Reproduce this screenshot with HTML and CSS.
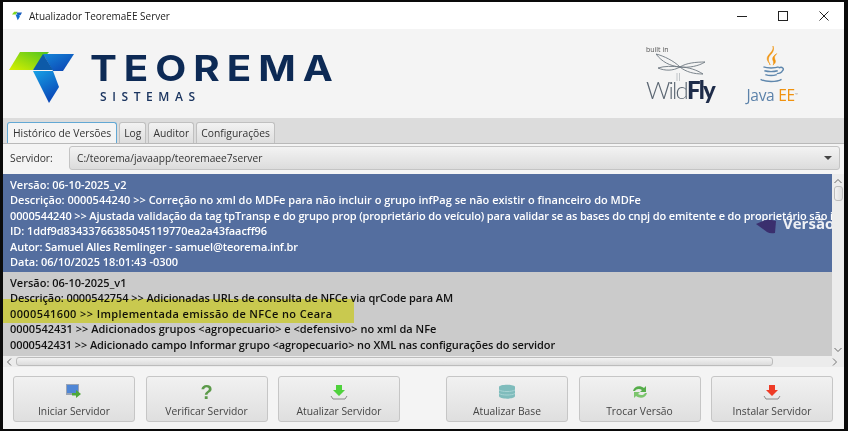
FILE: index.html
```html
<!DOCTYPE html>
<html lang="pt-BR">
<head>
<meta charset="utf-8">
<title>Atualizador TeoremaEE Server</title>
<link rel="stylesheet" href="styles.css">
</head>
<body>
<div class="window">
  <div class="titlebar">
    <svg class="app-icon" width="10" height="10" viewBox="0 0 14 12">
      <polygon points="0,4 3,0 8,0 5,4" fill="#7fd81e"/>
      <polygon points="6,1 14,1 12,5 8,5" fill="#1a5fc0"/>
      <polygon points="5,4 10,4 11,7 8,12" fill="#0f6fd0"/>
    </svg>
    <span class="title-text">Atualizador TeoremaEE Server</span>
    <div class="win-controls">
      <svg width="10" height="10" viewBox="0 0 10 10"><path d="M0 5.500H10" stroke="#222" stroke-width="1"/></svg>
      <svg width="10" height="10" viewBox="0 0 10 10"><rect x=".5" y=".5" width="9" height="9" fill="none" stroke="#222"/></svg>
      <svg width="10" height="10" viewBox="0 0 10 10"><path d="M.5 .5L9.500 9.500M9.500 .5L.5 9.500" stroke="#222" stroke-width="1"/></svg>
    </div>
  </div>

  <header class="brand">
    <svg class="logo-mark" width="66" height="52" viewBox="0 0 66 52">
      <defs>
        <linearGradient id="g1" x1="0" y1="1" x2="1" y2="0"><stop offset="0" stop-color="#d8f000"/><stop offset="1" stop-color="#4fc41f"/></linearGradient>
        <linearGradient id="g2" x1="0" y1="0" x2="1" y2="1"><stop offset="0" stop-color="#1586d8"/><stop offset="1" stop-color="#0b3fb0"/></linearGradient>
        <linearGradient id="g3" x1="0" y1="0" x2=".5" y2="1"><stop offset="0" stop-color="#16a2e6"/><stop offset="1" stop-color="#0a48b8"/></linearGradient>
      </defs>
      <polygon points="11,0 40,0 24,18 0,18" fill="url(#g1)"/>
      <polygon points="34,2 65,2 54,19 44,19" fill="url(#g2)"/>
      <polygon points="34,2 24,18 44,18" fill="#0d5aa8"/>
      <polygon points="24,19 44,19 50,35 40,51" fill="url(#g3)"/>
    </svg>
    <div class="wordmark">
      <span class="word-main">TEOREMA</span>
      <span class="word-sub">SISTEMAS</span>
    </div>
    <div class="partner wildfly">
      <span class="built">built in</span>
      <svg class="fly" width="50" height="28" viewBox="0 0 50 28">
        <path d="M0 1C8 3 18 8 24 14C14 13 6 9 0 1ZM2 15C8 13 17 13 24 14C17 18 9 18 2 15ZM24 14C30 10 40 9 49 9C43 13 33 15 24 14ZM24 14C32 14 41 17 47 21C38 21 30 19 24 14Z" fill="#f4f4f4" stroke="#6d7780" stroke-width=".9"/>
        <path d="M21 20V28M23.500 20V28" stroke="#aab0b5" stroke-width=".7"/>
      </svg>
      <span class="wf-name"><span class="wf-light">Wild</span><span class="wf-bold">Fly</span></span>
    </div>
    <div class="partner java">
      <svg class="cup" width="30" height="40" viewBox="0 0 30 42">
        <path d="M16 0C18 6 9 9 10 14C10.500 17 13 18 13 20C12 17 10 15 12 11C14 8 18 6 16 0ZM20 8C17 10 15 12 16 15C17 17 17 19 16 20C19 18 19 16 18 14C17 12 18 10 20 8Z" fill="#f0930f" stroke="#f0930f" stroke-width=".6"/>
        <path d="M6 22C10 23.500 18 23.500 22 22M7 26C11 27 17 27 21 26M8 30C11 31 17 31 20 30M22 23C26 21 28 24 26 26C25 28 22 29 20 29M3 35C8 38 20 38 25 35" fill="none" stroke="#5f87ad" stroke-width="1.500"/>
      </svg>
      <span class="java-name">Java <span class="ee">EE</span><sup class="tm">™</sup></span>
    </div>
  </header>

  <nav class="tabs">
    <span class="tab tab-active">Histórico de Versões</span>
    <span class="tab">Log</span>
    <span class="tab">Auditor</span>
    <span class="tab">Configurações</span>
  </nav>

  <div class="server-row">
    <label class="server-label">Servidor:</label>
    <div class="combo">
      <span>C:/teorema/javaapp/teoremaee7server</span>
      <i class="combo-arrow"></i>
    </div>
  </div>

  <section class="list-wrap">
    <div class="list-main">
      <div class="list">
        <article class="row row-selected">
          <div>Versão: 06-10-2025_v2</div>
          <div>Descrição: 0000544240 &gt;&gt; Correção no xml do MDFe para não incluir o grupo infPag se não existir o financeiro do MDFe</div>
          <div class="tight-more">0000544240 &gt;&gt; Ajustada validação da tag tpTransp e do grupo prop (proprietário do veículo) para validar se as bases do cnpj do emitente e do proprietário são iguais</div>
          <div class="tight">ID: 1ddf9d83433766385045119770ea2a43faacff96</div>
          <div class="tight-more">Autor: Samuel Alles Remlinger - samuel@teorema.inf.br</div>
          <div>Data: 06/10/2025 18:01:43 -0300</div>
          <svg class="wm-heart" width="20" height="14" viewBox="0 0 20 14"><path d="M0 4L8 .5Q14 -1 20 1L19 13Q14 14 11 12Z" fill="#3a2f6e"/></svg>
          <span class="watermark">Versão</span>
        </article>
        <article class="row row-plain">
          <div>Versão: 06-10-2025_v1</div>
          <div class="tight">Descrição: 0000542754 &gt;&gt; Adicionadas URLs de consulta de NFCe via qrCode para AM</div>
          <div class="wide">0000541600 &gt;&gt; Implementada emissão de NFCe no Ceara</div>
          <div>0000542431 &gt;&gt; Adicionados grupos &lt;agropecuario&gt; e &lt;defensivo&gt; no xml da NFe</div>
          <div class="tight">0000542431 &gt;&gt; Adicionado campo Informar grupo &lt;agropecuario&gt; no XML nas configurações do servidor</div>
          <div class="highlight"></div>
        </article>
      </div>
      <div class="vbar">
        <svg width="8" height="6" viewBox="0 0 8 6"><path d="M.5 5L4 1.500L7.500 5" fill="none" stroke="#666"/></svg>
        <div class="vthumb"></div>
        <svg class="vdown" width="8" height="6" viewBox="0 0 8 6"><path d="M.5 1L4 4.500L7.500 1" fill="none" stroke="#666"/></svg>
      </div>
    </div>
    <div class="hbar">
      <svg width="6" height="8" viewBox="0 0 6 8"><path d="M5 .5L1.500 4L5 7.500" fill="none" stroke="#666"/></svg>
      <div class="hthumb"></div>
      <svg width="6" height="8" viewBox="0 0 6 8"><path d="M1 .5L4.500 4L1 7.500" fill="none" stroke="#777"/></svg>
    </div>
  </section>

  <footer class="actions">
    <div class="btn-group">
      <button class="btn">
        <svg width="18" height="16" viewBox="0 0 18 16"><rect x="1" y="0" width="13" height="11" fill="#9aa4b4"/><rect x="2" y="1" width="11" height="8" fill="#4f86d6"/><path d="M7 9H11V6L16 10L11 14V11.500H7Z" fill="#4fa83a"/></svg>
        <span>Iniciar Servidor</span>
      </button>
      <button class="btn">
        <span class="q-mark">?</span>
        <span>Verificar Servidor</span>
      </button>
      <button class="btn">
        <svg width="18" height="16" viewBox="0 0 18 16"><path d="M6 1H12V6H15L9 12L3 6H6Z" fill="#4fd23c"/><path d="M1 12L3 15H15L17 12" fill="none" stroke="#8a8a8a" stroke-width="1"/></svg>
        <span>Atualizar Servidor</span>
      </button>
    </div>
    <div class="btn-group">
      <button class="btn">
        <svg width="18" height="16" viewBox="0 0 18 16"><path d="M1 3C1 0 17 0 17 3V12C17 15.500 1 15.500 1 12Z" fill="#7fbcbc"/><path d="M1 6C4 8 14 8 17 6M1 9.500C4 11.500 14 11.500 17 9.500" fill="none" stroke="#a9d4d4"/></svg>
        <span>Atualizar Base</span>
      </button>
      <button class="btn">
        <svg width="18" height="16" viewBox="0 0 18 16"><path d="M2 7C3 2 9 1 13 4L15 2V8H9L11 6C8 4 5 5 4 7Z" fill="#56ad4a"/><path d="M16 9C15 14 9 15 5 12L3 14V8H9L7 10C10 12 13 11 14 9Z" fill="#7cc56d"/></svg>
        <span>Trocar Versão</span>
      </button>
      <button class="btn">
        <svg width="18" height="16" viewBox="0 0 18 16"><path d="M6 1H12V6H15L9 12L3 6H6Z" fill="#ee3b26"/><path d="M1 12L3 15H15L17 12" fill="none" stroke="#8a8a8a" stroke-width="1"/></svg>
        <span>Instalar Servidor</span>
      </button>
    </div>
  </footer>
</div>
</body>
</html>
```
FILE: styles.css
```css
* { box-sizing: border-box; }
html, body { margin: 0; height: 100%; }
body { background: #0a0a0a; overflow: hidden; font-family: "Open Sans", "Noto Sans", sans-serif; font-size: 10.2px; color: #333; }

.window { margin: 2px 4px 2px 3px; height: 427px; background: #f4f4f4; display: flex; flex-direction: column; overflow: hidden; }

.titlebar { height: 27px; flex: none; background: #fff; display: flex; align-items: center; padding-left: 9px; }
.app-icon { margin-right: 7px; }
.title-text { font-size: 10px; color: #222; }
.win-controls { margin-left: auto; display: flex; align-items: center; gap: 31px; padding-right: 15px; }

.brand { height: 89px; flex: none; display: flex; align-items: flex-start; background: #f4f4f4; padding: 23px 0 0 6px; position: relative; }
.logo-mark { flex: none; }
.wordmark { margin-left: 15px; display: flex; flex-direction: column; }
.word-main { font-family: Inter, "Liberation Sans", sans-serif; font-weight: 700; font-size: 36px; line-height: 36px; letter-spacing: 6.2px; color: #0d2a55; margin-top: -2px; transform: scaleX(1.12); transform-origin: left center; }
.word-sub { font-family: "Open Sans", sans-serif; font-weight: 600; font-size: 12px; line-height: 14px; letter-spacing: 5.6px; color: #1b3560; margin: 4px 0 0 10px; }

.partner { display: flex; flex-direction: column; flex: none; }
.wildfly { margin-left: auto; margin-top: -6px; width: 72px; }
.built { font-family: "Open Sans", sans-serif; font-size: 7px; line-height: 8px; color: #555; }
.fly { margin: -1px 0 -4px 10px; }
.wf-name { font-family: Lato, sans-serif; font-size: 24px; line-height: 26px; letter-spacing: -1.8px; white-space: nowrap; }
.wf-light { font-weight: 300; color: #5b6672; }
.wf-bold { font-weight: 900; color: #1e2c49; }
.java { margin: -6px 46px 0 28px; width: 52px; align-items: center; }
.java-name { font-family: "Open Sans", sans-serif; font-size: 15.5px; line-height: 16px; margin-top: 1px; letter-spacing: -.3px; color: #5c82aa; white-space: nowrap; }
.ee { color: #f0920f; }
.tm { font-size: 4px; color: #999; vertical-align: top; }

.tabs { height: 26px; flex: none; background: #dcdcdc; border-bottom: 1px solid #b9b9b9; display: flex; align-items: flex-end; gap: 2px; padding-left: 4px; }
.tab { height: 21px; padding: 0 4px; line-height: 20px; font-size: 10.3px; color: #333; white-space: nowrap; background: linear-gradient(#f2f2f2, #dedede); border: 1px solid #c0c0c0; border-bottom: 0; border-radius: 3px 3px 0 0; }
.tab-active { background: #f4f4f4; border: 1px solid #62a8d4; border-bottom: 0; padding: 0 5px; }

.server-row { height: 30px; flex: none; display: flex; align-items: center; padding: 2px 4px 4px 7px; }
.server-label { width: 59px; font-size: 10.3px; color: #333; }
.combo { flex: 1; height: 24px; display: flex; align-items: center; justify-content: space-between; padding: 0 7px; background: linear-gradient(#f3f3f3, #dcdcdc); border: 1px solid #c4c4c4; border-radius: 3px; color: #333; }
.combo-arrow { width: 0; height: 0; border-left: 4px solid transparent; border-right: 4px solid transparent; border-top: 4px solid #444; }

.list-wrap { height: 193px; flex: none; display: flex; flex-direction: column; }
.list-main { height: 182px; display: flex; }
.list { flex: 1; min-width: 0; overflow: hidden; font-weight: 600; font-size: 11px; line-height: 15.4px; white-space: nowrap; }
.row { position: relative; padding: 3px 0 0 7px; overflow: hidden; }
.row-selected { height: 98px; background: #546e9f; color: #fff; }
.row-plain { height: 84px; background: #cbcbcb; color: #111; }
.tight { letter-spacing: -.09px; }
.tight-more { letter-spacing: -.135px; }
.wide { letter-spacing: .39px; }
.highlight { position: absolute; left: 0; top: 27px; width: 351px; height: 24px; background: #fdfd63; mix-blend-mode: multiply; }
.watermark { position: absolute; left: 780px; top: 39px; font-size: 15px; font-weight: 700; line-height: 20px; color: #eef0f5; }
.wm-heart { position: absolute; left: 753px; top: 46px; }

.vbar { width: 12px; flex: none; background: #ececec; display: flex; flex-direction: column; align-items: center; padding-top: 4px; }
.vthumb { width: 9px; height: 15px; margin-top: 2px; background: linear-gradient(90deg, #f2f2f2, #dcdcdc); border: 1px solid #bcbcbc; border-radius: 3px; }
.vdown { margin-top: auto; margin-bottom: 3px; }
.hbar { height: 11px; flex: none; background: #ececec; display: flex; align-items: center; padding: 0 6px 0 3px; }
.hthumb { width: 757px; height: 9px; margin: 0 auto 0 4px; background: linear-gradient(#f2f2f2, #dcdcdc); border: 1px solid #bcbcbc; border-radius: 3px; }

.actions { flex: 1; display: flex; justify-content: space-between; align-items: flex-start; padding: 9px 11px 0 10px; }
.btn-group { display: flex; gap: 10.5px; }
.btn { width: 122px; height: 46px; display: flex; flex-direction: column; align-items: center; justify-content: flex-end; padding: 0 0 3px; gap: 4px; background: linear-gradient(#f1f1f1, #dfdfdf); border: 1px solid #c6c6c6; border-radius: 3px; font-family: "Open Sans", sans-serif; font-size: 10.3px; line-height: 14px; color: #444; }
.q-mark { font-family: "Liberation Sans", sans-serif; font-weight: 700; font-size: 20px; line-height: 16px; height: 16px; color: #5c9a4a; }
```
